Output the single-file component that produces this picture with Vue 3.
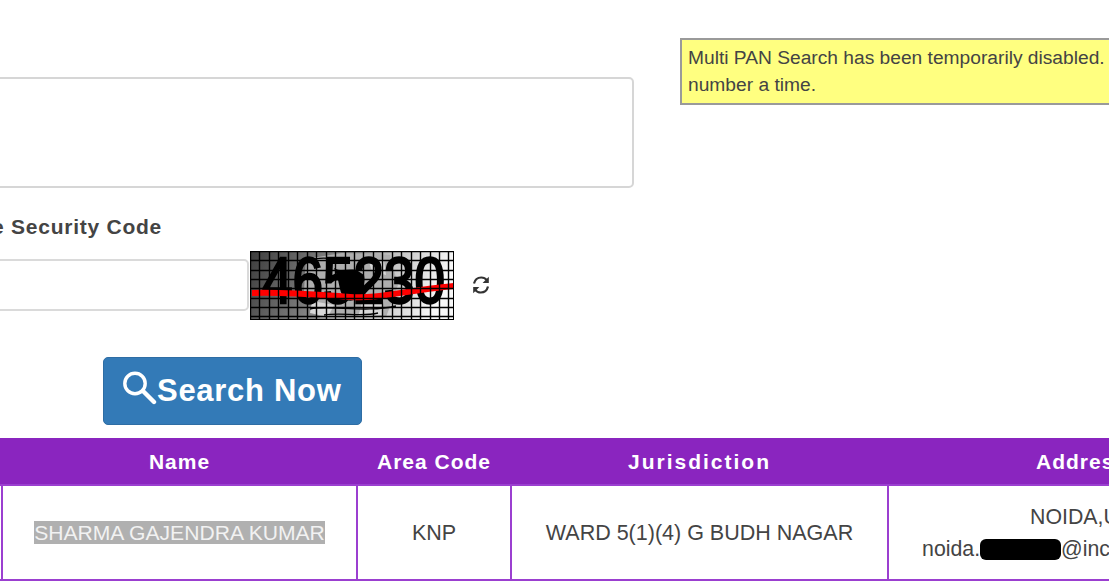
<script setup>
const captchaW = 204
const captchaH = 69
const vLines = []
for (let x = 0; x <= captchaW; x += 9.45) vLines.push(Math.round(x) + 0.5)
const hLines = []
for (let y = 0; y <= captchaH; y += 9.3) hLines.push(Math.round(y) + 0.5)
</script>

<template>
  <div class="page">
    <div class="top">
      <div class="form">
        <div class="textarea"></div>
        <label class="label">Enter the Security Code</label>
        <div class="captcha-row">
          <div class="input"></div>
          <svg class="captcha" :width="captchaW" :height="captchaH" viewBox="0 0 204 69">
            <defs>
              <linearGradient id="captchaBg" x1="0" y1="0" x2="1" y2="0.15">
                <stop offset="0" stop-color="#3c3c3c" />
                <stop offset="0.35" stop-color="#787878" />
                <stop offset="0.7" stop-color="#c0c0c0" />
                <stop offset="1" stop-color="#f8f8f8" />
              </linearGradient>
            </defs>
            <rect width="204" height="69" fill="url(#captchaBg)" />
            <path d="M56 8 L92 2 L140 4 L148 34 L136 66 L70 67 L54 40 Z" fill="#aeaeae" />
            <path d="M62 50 L84 54 L78 66 L60 62 Z M112 52 L134 48 L132 64 L108 66 Z M118 8 L134 10 L136 24 L122 20 Z" fill="#d8d8d8" />
            <text class="digits" x="12" y="52" textLength="183" lengthAdjust="spacingAndGlyphs">465230</text>
            <path d="M84 17 C92 22 100 16 108 20 L114 24 C116 32 112 44 104 49 C96 52 92 46 90 38 C88 28 87 24 84 17 Z" fill="#000" />
            <path d="M58 10 C72 4 88 8 100 12 M60 58 C80 54 116 62 146 55 M74 64 C90 61 112 66 128 62" fill="none" stroke="#000" stroke-width="1.3" />
            <path d="M2 42 C40 41 70 44 100 46 C130 48 150 40 204 35" fill="none" stroke="#f00" stroke-width="6" />
            <line v-for="x in vLines" :key="'v' + x" :x1="x" :x2="x" y1="0" y2="69" stroke="#000" stroke-width="1.4" />
            <line v-for="y in hLines" :key="'h' + y" :y1="y" :y2="y" x1="0" x2="204" stroke="#000" stroke-width="1.4" />
            <rect x="0.5" y="0.5" width="203" height="68" fill="none" stroke="#000" />
          </svg>
          <svg class="refresh" width="20" height="20" viewBox="0 0 20 20">
            <path d="M3 8.5 C4 4.5 7 2.5 10.2 2.5 C12.6 2.5 14.6 3.6 15.8 5.2" fill="none" stroke="#333" stroke-width="2.2" />
            <path d="M17.8 1.8 V8 H11.6 Z" fill="#333" />
            <path d="M17 11.5 C16 15.5 13 17.5 9.8 17.5 C7.4 17.5 5.4 16.4 4.2 14.8" fill="none" stroke="#333" stroke-width="2.2" />
            <path d="M2.2 18.2 V12 H8.4 Z" fill="#333" />
          </svg>
        </div>
        <button class="btn">
          <svg class="btn__icon" width="34" height="34" viewBox="0 0 34 34">
            <circle cx="12" cy="12.5" r="10.2" fill="none" stroke="#fff" stroke-width="3.4" />
            <path d="M20 20 L31 31" stroke="#fff" stroke-width="4.4" stroke-linecap="round" />
          </svg>
          <span>Search Now</span>
        </button>
      </div>
      <div class="notice">
        Multi PAN Search has been temporarily disabled. Please search one PAN<br />number a time.
      </div>
    </div>

    <table class="results">
      <colgroup>
        <col class="col-sno" />
        <col class="col-name" />
        <col class="col-area" />
        <col class="col-jur" />
        <col class="col-addr" />
      </colgroup>
      <thead>
        <tr>
          <th>Sr.</th>
          <th>Name</th>
          <th>Area Code</th>
          <th class="jur">Jurisdiction</th>
          <th>Address</th>
        </tr>
      </thead>
      <tbody>
        <tr>
          <td>1</td>
          <td><span class="selected">SHARMA GAJENDRA KUMAR</span></td>
          <td>KNP</td>
          <td>WARD 5(1)(4) G BUDH NAGAR</td>
          <td class="addr">
            NOIDA,UP<br />
            noida.<span class="redact"></span>@incometax.gov.in
          </td>
        </tr>
      </tbody>
    </table>
  </div>
</template>

<style>
body {
  background: #fff;
}
</style>

<style scoped>
.page {
  width: 1109px;
  height: 582px;
  overflow: hidden;
  font-family: "Liberation Sans", Arial, sans-serif;
  color: #444;
}

.top {
  display: flex;
  align-items: flex-start;
  padding-top: 38px;
  height: 438px;
  box-sizing: border-box;
}

.form {
  width: 734px;
  margin-left: -100px;
  flex-shrink: 0;
  padding-top: 39px;
  box-sizing: border-box;
}

.textarea {
  height: 111px;
  border: 2px solid #d6d6d6;
  border-radius: 5px;
  box-sizing: border-box;
}

.label {
  display: block;
  margin-top: 26px;
  width: 262px;
  text-align: right;
  font-size: 21px;
  line-height: 26px;
  font-weight: bold;
  letter-spacing: 0.75px;
  color: #444;
}

.captcha-row {
  display: flex;
  align-items: flex-start;
  margin-top: 17px;
}

.input {
  width: 349px;
  height: 52px;
  margin-top: 2px;
  border: 2px solid #dadada;
  border-radius: 5px;
  box-sizing: border-box;
  flex-shrink: 0;
}

.captcha {
  display: block;
  margin-left: 1px;
  margin-top: -6px;
}

.digits {
  font-family: "Liberation Sans", Arial, sans-serif;
  font-size: 64px;
  fill: #000;
  stroke: #000;
  stroke-width: 2.4px;
}

.refresh {
  display: block;
  margin-left: 17px;
  margin-top: 18px;
}

.btn {
  display: flex;
  align-items: center;
  width: 259px;
  height: 68px;
  margin: 37px 0 0 203px;
  padding: 0 0 0 19px;
  background: #337ab7;
  border: 1px solid #2e6da4;
  border-radius: 5px;
  box-sizing: border-box;
  color: #fff;
  font-family: "Liberation Sans", Arial, sans-serif;
  font-size: 31px;
  font-weight: bold;
  letter-spacing: 0.7px;
}

.btn__icon {
  display: block;
  margin-top: -6px;
}

.notice {
  flex-shrink: 0;
  margin-left: 46px;
  width: 780px;
  height: 67px;
  padding: 5px 6px;
  background: #ffff80;
  border: 2px solid #9a9a9a;
  box-sizing: border-box;
  font-size: 19.2px;
  line-height: 26.5px;
  color: #444;
}

.results {
  border-collapse: collapse;
  table-layout: fixed;
  width: 1375px;
  margin-left: -101px;
  font-size: 21.5px;
  color: #444;
}

.col-sno {
  width: 102px;
}

.col-name {
  width: 355px;
}

.col-area {
  width: 154px;
}

.col-jur {
  width: 377px;
}

.col-addr {
  width: 387px;
}

th {
  height: 46px;
  box-sizing: border-box;
  padding: 2px 0 0;
  background: #8a25bf;
  border: 1px solid #8a25bf;
  color: #fff;
  font-size: 21px;
  letter-spacing: 1px;
  text-align: center;
}

.jur {
  letter-spacing: 2px;
}

td {
  height: 95px;
  box-sizing: border-box;
  padding: 1px 0 0;
  border: 2px solid #9b3fd0;
  text-align: center;
  line-height: 32px;
}

.selected {
  background: #b0b0b0;
  color: #f2f2f2;
  font-size: 21.1px;
}

.addr {
  font-size: 21.3px;
}

.redact {
  background: #000;
  border-radius: 6px;
  display: inline-block;
  width: 81px;
  height: 21px;
  vertical-align: -4px;
}
</style>
